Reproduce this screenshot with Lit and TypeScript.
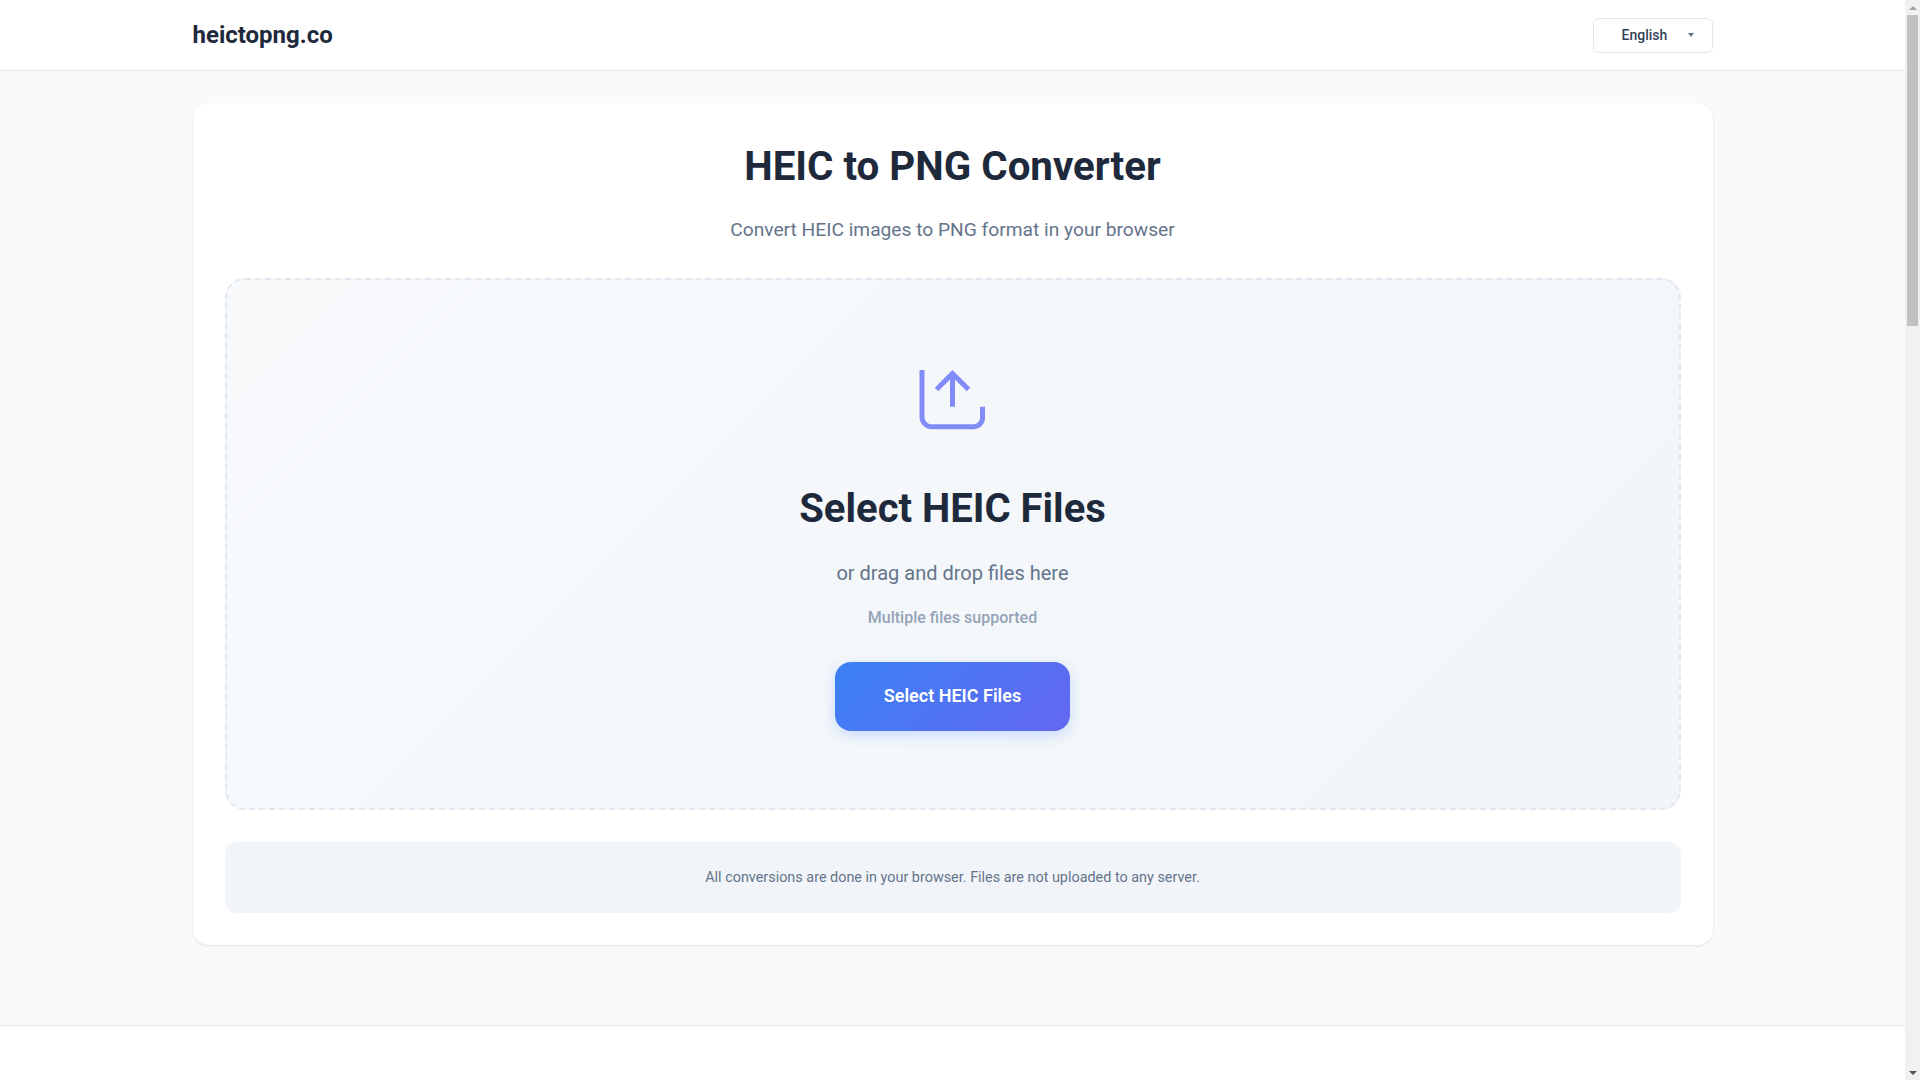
import { LitElement, html, css } from "lit";
import { customElement } from "lit/decorators.js";

@customElement("app-root")
export class AppRoot extends LitElement {
  static styles = css`
    :host { display: flex; height: 1080px; overflow: hidden; font-family: Roboto, "Liberation Sans", sans-serif; background: #f8fafc; color: #1e293b; }
    .page { flex: 1; min-width: 0; height: 1080px; overflow: hidden; }
    .scrollbar { flex: 0 0 15px; height: 1080px; background: #f1f1f1; display: flex; flex-direction: column; align-items: center; }
    .arrow { flex: 0 0 15px; display: flex; align-items: center; justify-content: center; }
    .up { width: 0; height: 0; border-left: 4px solid transparent; border-right: 4px solid transparent; border-bottom: 4px solid #a3a3a3; }
    .down { width: 0; height: 0; border-left: 4px solid transparent; border-right: 4px solid transparent; border-top: 4px solid #505050; }
    .track { flex: 1; width: 100%; }
    .thumb { margin-left: 2px; width: 11px; height: 311px; background: #c1c1c1; }
    .header { background: #fff; border-bottom: 1px solid #e2e8f0; height: 70px; box-sizing: content-box; }
    .wrap { max-width: 1520px; margin: 0 auto; }
    .header .wrap { height: 70px; display: flex; align-items: center; justify-content: space-between; }
    .logo { font-size: 24px; font-weight: 700; color: #1e293b; }
    .lang { box-sizing: border-box; width: 120px; height: 35px; border: 1px solid #e2e8f0; border-radius: 6px; background: #fff;
      display: flex; align-items: center; padding-left: 28px; gap: 21px; font-size: 14px; font-weight: 500; color: #334155; }
    .caret { width: 0; height: 0; border-left: 3.5px solid transparent; border-right: 3.5px solid transparent; border-top: 4px solid #64748b; }
    main { padding: 32px 0 80px; }
    .card { background: #fff; border-radius: 16px; padding: 32px; box-shadow: 0 1px 3px rgba(0,0,0,.1); }
    h1 { margin: 0 0 16px; font-size: 40.3px; line-height: 64px; font-weight: 700; text-align: center; color: #1e293b; }
    .sub { margin: 0 0 32px; font-size: 19.2px; line-height: 30.72px; text-align: center; color: #64748b; }
    .drop { box-sizing: border-box; height: 532px; border: 2px dashed #e2e8f0; border-radius: 20px; padding: 80px 32px 0;
      background: linear-gradient(135deg, #f8fafc, #f1f5f9); display: flex; flex-direction: column; align-items: center; }
    .icon { display: block; width: 72px; height: 72px; color: #818cf8; }
    h2 { margin: 53px 0 24px; font-size: 40px; line-height: 48px; font-weight: 700; color: #1e293b; }
    .or { margin: 0 0 16px; font-size: 20px; line-height: 32px; color: #64748b; }
    .multi { margin: 0 0 31px; font-size: 16px; line-height: 26px; font-weight: 500; color: #94a3b8; }
    .btn { width: 235px; height: 69px; border: 0; padding: 0 0 1px; border-radius: 16px; background: linear-gradient(135deg, #3b82f6, #6366f1); color: #fff;
      font: 600 18px Roboto, "Liberation Sans", sans-serif; box-shadow: 0 4px 14px rgba(59,130,246,.25); }
    .info { margin-top: 32px; height: 71px; border-radius: 12px; background: #f1f5f9; display: flex; align-items: center; justify-content: center;
      font-size: 14.4px; color: #64748b; }
    .footer { background: #fff; border-top: 1px solid #e2e8f0; height: 200px; }
  `;

  render() {
    return html`
      <div class="page">
        <header class="header"><div class="wrap">
          <div class="logo">heictopng.co</div>
          <div class="lang"><span>English</span><span class="caret"></span></div>
        </div></header>
        <main><div class="wrap"><section class="card">
          <h1>HEIC to PNG Converter</h1>
          <p class="sub">Convert HEIC images to PNG format in your browser</p>
          <div class="drop">
            <svg class="icon" viewBox="0 0 72 72" fill="none" stroke="currentColor" stroke-width="5">
              <path d="M5 10V57a10 10 0 0 0 9 9.8H57a9 9 0 0 0 8.5-9.8V46.7" />
              <path d="M35.5 46.7V13.5M19.5 29.5L35.5 13.5L51.5 29.5" />
            </svg>
            <h2>Select HEIC Files</h2>
            <p class="or">or drag and drop files here</p>
            <p class="multi">Multiple files supported</p>
            <button class="btn">Select HEIC Files</button>
          </div>
          <div class="info">All conversions are done in your browser. Files are not uploaded to any server.</div>
        </section></div></main>
        <footer class="footer"></footer>
      </div>
      <div class="scrollbar">
        <div class="arrow"><span class="up"></span></div>
        <div class="track"><div class="thumb"></div></div>
        <div class="arrow"><span class="down"></span></div>
      </div>
    `;
  }
}
